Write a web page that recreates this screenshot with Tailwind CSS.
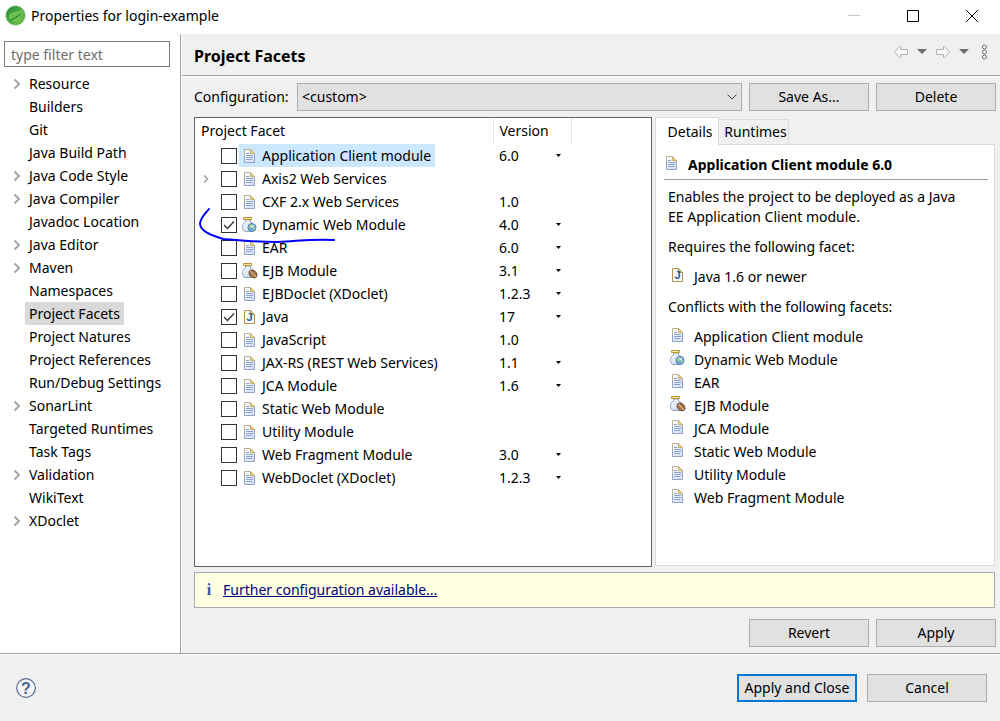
<!DOCTYPE html>
<html lang="en">
    <head>
        <meta charset="UTF-8">
        <meta name="viewport" content="width=device-width, initial-scale=1.0">

        <title>Properties for login-example</title>

        <!-- TailwindCSS -->
        <script src="https://cdn.jsdelivr.net/npm/@tailwindcss/browser@4"></script>
    </head>
    <body class="flex flex-col min-h-screen bg-white text-black text-[14px] leading-5 font-['Noto_Sans','Open_Sans',sans-serif]">

        <!-- Icons -->
        <svg class="absolute w-0 h-0" aria-hidden="true">
            <defs>
                <linearGradient id="paper" x1="0" y1="0" x2="1" y2="1">
                    <stop offset="0" stop-color="#ffffff" />
                    <stop offset="1" stop-color="#cfdcf3" />
                </linearGradient>
                <linearGradient id="glass" x1="0" y1="0" x2="1" y2="1">
                    <stop offset="0" stop-color="#ffffff" />
                    <stop offset="1" stop-color="#b9cde6" />
                </linearGradient>
                <linearGradient id="leaf" x1="0" y1="0" x2="1" y2="1">
                    <stop offset="0" stop-color="#1f8a3b" />
                    <stop offset="1" stop-color="#7cc142" />
                </linearGradient>
            </defs>
            <symbol id="doc" viewBox="0 0 16 16">
                <path d="M2.500 1.500h6l4 4v9h-10z" fill="url(#paper)" />
                <path d="M2.500 10V1.500h6" fill="none" stroke="#b9b18f" />
                <path d="M2.500 8v6.500h10v-9" fill="none" stroke="#93a3c6" />
                <path d="M8.500 1.500v4h4z" fill="#ecd28c" stroke="#c9ae68" />
                <path d="M4 5.500h3M4 7.500h7M4 9.500h7M4 11.500h6" stroke="#8ba3d0" />
            </symbol>
            <symbol id="java" viewBox="0 0 16 16">
                <path d="M2.500 1.500h6l4 4v9h-10z" fill="#f4f8fd" stroke="#b5924a" />
                <path d="M8.500 1.500v4h4z" fill="#ecd28c" stroke="#b5924a" />
            </symbol>
            <symbol id="jar" viewBox="0 0 16 16">
                <path d="M3.500 3v2C1.500 6 .5 7.500.5 10c0 2.500 1 4 2.500 4.500h7c1.500-.5 2.500-2 2.500-4.500S11 6 8.500 5V3z" fill="url(#glass)" stroke="#93a9c8" />
                <path d="M1.500.5h8v2h-8z" fill="#f8e6ae" stroke="#bf9430" />
            </symbol>
            <symbol id="web" viewBox="0 0 16 16">
                <use href="#jar" />
                <circle cx="10" cy="10.500" r="4" fill="#6aabd8" stroke="#5282b4" />
                <path d="M8 7.500l2.500 0-.5 3-2.500 1-.5-2zM11 11l2-1 .5 1.500-2 2z" fill="#a9cf82" />
                <path d="M9.500 8.500l2-.5.5 2-2 .5z" fill="#f2f8fc" />
            </symbol>
            <symbol id="ejb" viewBox="0 0 16 16">
                <use href="#jar" />
                <ellipse cx="11" cy="11" rx="4.300" ry="3.200" transform="rotate(38 11 11)" fill="#a9764a" stroke="#74492a" />
                <path d="M8 8.500c3 .5 2 3 6 5" fill="none" stroke="#f0d5b5" />
            </symbol>
            <symbol id="chevron" viewBox="0 0 10 12">
                <path d="M2.500 1.500L7 6l-4.500 4.500" fill="none" stroke="#a6a6a6" stroke-width="2" />
            </symbol>
            <symbol id="arrow" viewBox="0 0 16 14">
                <path d="M1.500 7L6.500 1.500h1v3h7v5h-7v3h-1z" fill="#f8f8f8" stroke="#b0b0b0" stroke-linejoin="round" />
            </symbol>
        </svg>

        <!-- Title bar -->
        <header class="flex items-center h-[34px] pb-[3px] pl-[5px] pr-[21px]">
            <svg class="w-[21px] h-[21px]" viewBox="0 0 21 21" aria-hidden="true">
                <circle cx="10.500" cy="10.500" r="9.500" fill="url(#leaf)" stroke="#4ca84a" stroke-dasharray="2 1" />
                <path d="M17.500 3.500c-1.500 2.500-4 2.700-7 3C6.500 7 4 9 4 12.200c0 1.300.5 2.300 1.200 3C8 12.500 12 12.500 15.500 9c-2 4-6 5.200-9.500 6.900 2.500 1.800 6.500 1.500 9.200-1C18 12 18.500 7.500 17.500 3.500z" fill="#6cc04e" />
                <path d="M5 15.500c3-2.700 7.500-3 10.700-7" fill="none" stroke="#22803a" />
            </svg>
            <h1 class="flex-1 ml-[5px]">Properties for login-example</h1>
            <div class="flex items-center gap-[45px]">
                <button type="button" aria-label="Minimize">
                    <svg class="w-[14px] h-[14px]" viewBox="0 0 14 14"><path d="M1 6.500h12" stroke="#c8c8c8" /></svg>
                </button>
                <button type="button" aria-label="Maximize">
                    <svg class="w-[14px] h-[14px]" viewBox="0 0 14 14"><path d="M1.500 1.500h11v11h-11z" fill="none" stroke="#000" /></svg>
                </button>
                <button type="button" aria-label="Close">
                    <svg class="w-[14px] h-[14px]" viewBox="0 0 14 14"><path d="M1 1l12 12M13 1L1 13" stroke="#000" /></svg>
                </button>
            </div>
        </header>

        <div class="flex flex-1">
            <!-- Pages -->
            <nav class="w-[181px] shrink-0 border-r border-[#a0a0a0] pt-[7px] pl-1">
                <input type="text" aria-label="type filter text" placeholder="type filter text" class="w-[166px] h-[26px] border border-[#7a7a7a] px-1.5 mb-[5px] placeholder:text-[#6d6d6d] outline-none">
                <ul id="pages"></ul>
            </nav>

            <main class="flex flex-col flex-1 bg-[#f0f0f0] border-l border-white">
                <div class="flex items-center h-[43px] border-b border-white">
                    <div class="flex items-center w-full h-full pl-3 pr-3 border-b border-[#a0a0a0]">
                        <h2 class="flex-1 pt-0.5 text-[16px] font-bold">Project Facets</h2>
                        <div class="flex items-center gap-2 pb-1.5">
                            <button type="button" aria-label="Back"><svg class="w-4 h-[14px]"><use href="#arrow" /></svg></button>
                            <button type="button" aria-label="Back history"><svg class="w-[10px] h-[6px]" viewBox="0 0 10 6"><path d="M0 0h10L5 5z" fill="#6d6d6d" /></svg></button>
                            <button type="button" aria-label="Forward"><svg class="w-4 h-[14px] -scale-x-100"><use href="#arrow" /></svg></button>
                            <button type="button" aria-label="Forward history"><svg class="w-[10px] h-[6px]" viewBox="0 0 10 6"><path d="M0 0h10L5 5z" fill="#6d6d6d" /></svg></button>
                            <button type="button" aria-label="View menu" class="pl-1">
                                <svg class="w-[7px] h-4" viewBox="0 0 7 16" fill="#fff" stroke="#6d6d6d"><circle cx="3.500" cy="3" r="2" /><circle cx="3.500" cy="8" r="2" /><circle cx="3.500" cy="13" r="2" /></svg>
                            </button>
                        </div>
                    </div>
                </div>

                <div class="flex items-center gap-[7px] pt-1.5 pl-3 pr-1">
                    <label for="configuration" class="w-24">Configuration:</label>
                    <div class="grid flex-1 items-center">
                        <select id="configuration" class="col-start-1 row-start-1 appearance-none w-full h-7 bg-[#e1e1e1] border border-[#adadad] px-1">
                            <option>&lt;custom&gt;</option>
                        </select>
                        <svg class="col-start-1 row-start-1 justify-self-end mr-1 w-3 h-2 pointer-events-none" viewBox="0 0 12 8"><path d="M1.500 1.500L6 6l4.500-4.500" fill="none" stroke="#444" /></svg>
                    </div>
                    <button type="button" class="w-[120px] h-7 bg-[#e1e1e1] border border-[#adadad]">Save As...</button>
                    <button type="button" class="w-[120px] h-7 bg-[#e1e1e1] border border-[#adadad]">Delete</button>
                </div>

                <div class="flex flex-1 gap-[3px] pt-1.5 pl-3 pr-[5px]">
                    <!-- Facets table -->
                    <div class="relative flex-1 bg-white border border-[#646464]">
                        <table class="w-full table-fixed">
                            <thead>
                                <tr class="h-[26px] text-left">
                                    <th class="font-normal pl-1.5 border-r border-[#e5e5e5]">Project Facet</th>
                                    <th class="w-[78px] font-normal pl-1.5 border-r border-[#e5e5e5]">Version</th>
                                    <th class="w-20"></th>
                                </tr>
                            </thead>
                            <tbody id="facets"></tbody>
                        </table>
                        <svg class="absolute left-0 top-[86px] w-[150px] h-10 pointer-events-none" viewBox="0 0 150 40" aria-hidden="true">
                            <path d="M14 5C10 10 5 14 5 20c1 8 12 11 23 15 14 1 30 3 55 3 22-1 30-3 56-2" fill="none" stroke="#0000f5" stroke-width="2" stroke-linecap="round" />
                        </svg>
                    </div>

                    <!-- Details -->
                    <section class="flex flex-col w-[340px]">
                        <div class="flex items-end h-7 -mb-px z-10">
                            <button type="button" class="w-16 h-7 pl-1.5 bg-white border border-b-0 border-[#dcdcdc]">Details</button>
                            <button type="button" class="w-[70px] h-[26px] pl-1 bg-[#f0f0f0] border border-l-0 border-[#dcdcdc]">Runtimes</button>
                        </div>
                        <div class="flex-1 bg-white border border-[#dcdcdc] pt-2 pl-2 pr-1.5 mb-px">
                            <h3 class="flex gap-2 h-[27px] pt-0.5 border-b border-[#a0a0a0] text-[14px] font-bold">
                                <svg class="w-4 h-4" aria-hidden="true"><use href="#doc" /></svg>
                                Application Client module 6.0
                            </h3>
                            <div class="flex flex-col gap-[10px] pt-[7px] pl-1">
                                <p>Enables the project to be deployed as a Java<br>EE Application Client module.</p>
                                <p>Requires the following facet:</p>
                                <p class="flex gap-2 pl-0.5"><span data-icon="java"></span>Java 1.6 or newer</p>
                                <p>Conflicts with the following facets:</p>
                                <ul id="conflicts" class="flex flex-col gap-[3px] pl-0.5"></ul>
                            </div>
                        </div>
                    </section>
                </div>

                <div class="pt-[5px] pl-3 pr-[5px]">
                    <div class="flex items-center gap-2 h-9 px-2 bg-[#ffffe1] border border-[#a7a9b4]">
                        <span class="w-3 text-center font-bold text-[16px] text-[#3558a0] font-['Liberation_Serif',serif]">i</span>
                        <a href="#" class="text-[#00007a] underline">Further configuration available...</a>
                    </div>
                </div>

                <div class="flex justify-end gap-[7px] pt-[11px] pr-1 pb-1.5">
                    <button type="button" class="w-[120px] h-7 bg-[#e1e1e1] border border-[#adadad]">Revert</button>
                    <button type="button" class="w-[120px] h-7 bg-[#e1e1e1] border border-[#adadad]">Apply</button>
                </div>
            </main>
        </div>

        <!-- Footer -->
        <footer class="border-t border-[#a0a0a0]">
            <div class="flex items-center gap-[10px] h-[67px] bg-[#f0f0f0] border-t border-white pl-4 pr-[13px]">
                <button type="button" aria-label="Help" class="mr-auto">
                    <svg class="w-5 h-5" viewBox="0 0 20 20">
                        <circle cx="10" cy="10" r="9.300" fill="#f4f5f8" stroke="#5a6d92" stroke-width="1.200" />
                        <text x="10" y="15.500" text-anchor="middle" font-family="Liberation Sans" font-size="16" font-weight="700" fill="#4e6390">?</text>
                    </svg>
                </button>
                <button type="button" class="w-[120px] h-7 bg-[#e1e1e1] border-2 border-[#0078d7] whitespace-nowrap">Apply and Close</button>
                <button type="button" class="w-[120px] h-7 bg-[#e1e1e1] border border-[#adadad]">Cancel</button>
            </div>
        </footer>

        <script type="text/javascript">
            // name, has children
            const pages = [
                ['Resource', true], ['Builders'], ['Git'], ['Java Build Path'], ['Java Code Style', true],
                ['Java Compiler', true], ['Javadoc Location'], ['Java Editor', true], ['Maven', true],
                ['Namespaces'], ['Project Facets'], ['Project Natures'], ['Project References'],
                ['Run/Debug Settings'], ['SonarLint', true], ['Targeted Runtimes'], ['Task Tags'],
                ['Validation', true], ['WikiText'], ['XDoclet', true],
            ];

            // name, icon, version, can change version
            const facets = [
                ['Application Client module', 'doc', '6.0', true],
                ['Axis2 Web Services', 'doc', '', false],
                ['CXF 2.x Web Services', 'doc', '1.0', false],
                ['Dynamic Web Module', 'web', '4.0', true],
                ['EAR', 'doc', '6.0', true],
                ['EJB Module', 'ejb', '3.1', true],
                ['EJBDoclet (XDoclet)', 'doc', '1.2.3', true],
                ['Java', 'java', '17', true],
                ['JavaScript', 'doc', '1.0', false],
                ['JAX-RS (REST Web Services)', 'doc', '1.1', true],
                ['JCA Module', 'doc', '1.6', true],
                ['Static Web Module', 'doc', '', false],
                ['Utility Module', 'doc', '', false],
                ['Web Fragment Module', 'doc', '3.0', true],
                ['WebDoclet (XDoclet)', 'doc', '1.2.3', true],
            ];

            const conflicts = [
                ['Application Client module', 'doc'], ['Dynamic Web Module', 'web'], ['EAR', 'doc'],
                ['EJB Module', 'ejb'], ['JCA Module', 'doc'], ['Static Web Module', 'doc'],
                ['Utility Module', 'doc'], ['Web Fragment Module', 'doc'],
            ];

            const checked = ['Dynamic Web Module', 'Java'];

            // The Java page icon carries its letter on top of the sheet
            function renderIcon(icon) {
                let letter = icon === 'java' ? '<text x="4.500" y="12" font-family="Liberation Sans" font-size="11" font-weight="700" fill="#2b5f96">J</text>' : '';
                return `<svg class="w-4 h-4 shrink-0" viewBox="0 0 16 16" aria-hidden="true"><use href="#${icon}" />${letter}</svg>`;
            }

            document.querySelectorAll('[data-icon]').forEach(el => {
                el.innerHTML = renderIcon(el.dataset.icon);
            });

            document.getElementById('pages').innerHTML = pages.map(([name, parent]) => `
                <li class="flex items-center h-[23px] pl-2">
                    <span class="w-[13px]">${parent ? '<svg class="w-[10px] h-3"><use href="#chevron" /></svg>' : ''}</span>
                    <a href="#" class="px-1 leading-[23px] whitespace-nowrap ${name === 'Project Facets' ? 'bg-[#d9d9d9]' : ''}">${name}</a>
                </li>`).join('');

            document.getElementById('facets').innerHTML = facets.map(([name, icon, version, menu], i) => `
                <tr class="h-[23px]">
                    <td class="p-0">
                        <div class="flex items-center h-[23px] pl-[7px]">
                            <span class="w-[19px]">${name.startsWith('Axis2') ? '<svg class="w-2 h-[10px]"><use href="#chevron" /></svg>' : ''}</span>
                            <span class="grid w-4 h-4 mr-0.5">
                                <input id="facet${i}" type="checkbox" ${checked.includes(name) ? 'checked' : ''} class="peer col-start-1 row-start-1 appearance-none w-4 h-4 bg-white border border-[#333]">
                                <svg class="hidden peer-checked:block col-start-1 row-start-1 w-4 h-4 pointer-events-none" viewBox="0 0 16 16"><path d="M3 8l3.500 3.500L13 4.500" fill="none" stroke="#333" stroke-width="1.300" /></svg>
                            </span>
                            <label for="facet${i}" class="flex items-center gap-1 h-[23px] pl-[3px] pr-1 whitespace-nowrap ${i === 0 ? 'bg-[#cce8ff]' : ''}">
                                ${renderIcon(icon)}${name}
                            </label>
                        </div>
                    </td>
                    <td class="p-0">
                        <div class="flex items-center justify-between pl-1.5 pr-[10px]">
                            ${version}
                            ${menu ? `<button type="button" aria-label="Change version of ${name}"><svg class="w-[5px] h-[3px]" viewBox="0 0 5 3"><path d="M0 0h5L2.500 3z" /></svg></button>` : ''}
                        </div>
                    </td>
                    <td></td>
                </tr>`).join('');

            document.getElementById('conflicts').innerHTML = conflicts.map(([name, icon]) => `
                <li class="flex gap-2">${renderIcon(icon)}${name}</li>`).join('');
        </script>
    </body>
</html>
